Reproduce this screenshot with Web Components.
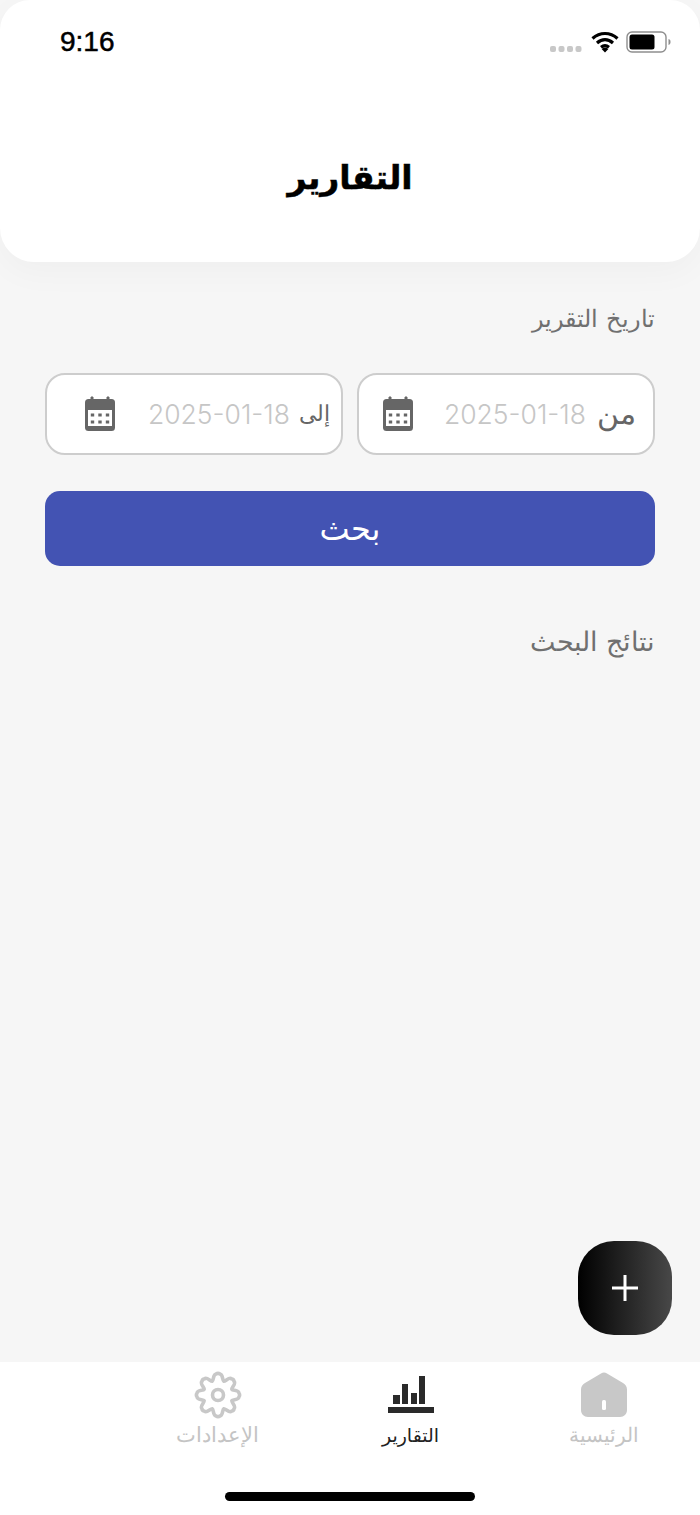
<!DOCTYPE html>
<html lang="ar">
<head>
<meta charset="utf-8">
<title>التقارير</title>
<style>
  html, body { margin: 0; padding: 0; background: #f6f6f6; }
  body { width: 700px; height: 1515px; overflow: hidden; font-family: "DejaVu Sans", sans-serif; }
</style>
</head>
<body>
<report-screen>
  <app-header title="التقارير" time="9:16"></app-header>
  <section-label style="margin-top:41px">تاريخ التقرير</section-label>
  <date-row>
    <date-field label="من" value="2025-01-18" size="30" gap="11" pad-start="17" pad-end="23"></date-field>
    <date-field label="إلى" value="2025-01-18" size="22" gap="9" pad-start="11" pad-end="37"></date-field>
  </date-row>
  <search-button>بحث</search-button>
  <section-label style="margin-top:60px;font-size:26.500px">نتائج البحث</section-label>
  <add-fab></add-fab>
  <tab-bar>
    <tab-item icon="home" label="الرئيسية" size="20"></tab-item>
    <tab-item icon="chart" label="التقارير" size="19" active></tab-item>
    <tab-item icon="gear" label="الإعدادات" size="21"></tab-item>
  </tab-bar>
</report-screen>

<script>
const ARABIC = '"DejaVu Sans", sans-serif';

class ReportScreen extends HTMLElement {
  constructor() {
    super();
    this.attachShadow({ mode: 'open' });
    this.shadowRoot.innerHTML = `
      <style>
        :host { display: flex; flex-direction: column; position: relative; width: 700px; height: 1515px; background: #f6f6f6; overflow: hidden; }
      </style>
      <slot></slot>`;
  }
}

class AppHeader extends HTMLElement {
  constructor() {
    super();
    this.attachShadow({ mode: 'open' });
    this.shadowRoot.innerHTML = `
      <style>
        :host { display: flex; flex-direction: column; height: 262px; flex: none; background: #fff; border-radius: 30px 30px 34px 34px; box-shadow: 0 10px 34px rgba(0,0,0,.03); }
        .status { display: flex; justify-content: space-between; align-items: center; height: 30px; margin-top: 27px; padding: 0 29px 0 60px; }
        .time { font: 400 28px/30px "Liberation Sans", sans-serif; color: #000; -webkit-text-stroke: .5px #000; }
        .icons { display: flex; align-items: center; gap: 8px; }
        .wifi { margin: 0 -1px 0 1px; }
        svg { display: block; }
        h1 { margin: 99px 0 0; text-align: center; font: 700 33px/44px ${ARABIC}; color: #000; -webkit-text-stroke: .5px #000; }
      </style>
      <div class="status">
        <span class="time">${this.getAttribute('time')}</span>
        <div class="icons">
          <svg width="32" height="8" viewBox="0 0 32 8" style="margin-top:14px"><g fill="#c8c8c8"><rect x="0" y="1" width="6" height="6" rx="2"/><rect x="8.500" y="1" width="6" height="6" rx="2"/><rect x="17" y="1" width="6" height="6" rx="2"/><rect x="25.500" y="1" width="6" height="6" rx="2"/></g></svg>
          <svg class="wifi" width="28" height="22" viewBox="0 0 28 22"><path d="M1.500 7.500C9 .8 19 .8 26.500 7.500M6 12C11 7.600 17 7.600 22 12M10 16.300c2.600-2 5.400-2 8 0" fill="none" stroke="#000" stroke-width="3.200"/><path d="M14 21.500l-3.400-3.600c2-1.400 4.800-1.400 6.800 0z"/></svg>
          <svg width="45" height="22" viewBox="0 0 45 22"><rect x="1" y="1" width="39" height="20" rx="5" fill="none" stroke="#8e8e8e" stroke-width="1.400"/><rect x="3.500" y="3.500" width="25" height="15" rx="2.500" fill="#000"/><path d="M42.500 8c1.600.4 2 1.600 2 3s-.4 2.600-2 3z" fill="#8e8e8e"/></svg>
        </div>
      </div>
      <h1>${this.getAttribute('title')}</h1>`;
  }
}

class SectionLabel extends HTMLElement {
  constructor() {
    super();
    this.attachShadow({ mode: 'open' });
    this.shadowRoot.innerHTML = `
      <style>
        :host { display: block; flex: none; direction: rtl; padding: 0 45px; font: 200 24px/32px ${ARABIC}; color: #707070; }
      </style>
      <slot></slot>`;
  }
}

class DateRow extends HTMLElement {
  constructor() {
    super();
    this.attachShadow({ mode: 'open' });
    this.shadowRoot.innerHTML = `
      <style>
        :host { display: grid; grid-template-columns: 1fr 1fr; gap: 14px; flex: none; direction: rtl; margin: 38px 45px 0; }
      </style>
      <slot></slot>`;
  }
}

class DateField extends HTMLElement {
  constructor() {
    super();
    this.attachShadow({ mode: 'open' });
    const start = this.getAttribute('pad-start');
    const end = this.getAttribute('pad-end');
    this.shadowRoot.innerHTML = `
      <style>
        :host { display: flex; align-items: center; box-sizing: border-box; height: 82px; background: #fff; border: 2px solid #cdcdcd; border-radius: 20px; padding: 0 ${start}px 0 ${end}px; direction: rtl; }
        .label { font: 200 ${this.getAttribute('size')}px/32px ${ARABIC}; color: #666; margin-inline-end: ${this.getAttribute('gap')}px; }
        .value { font: 300 26.500px/32px Inter, sans-serif; color: #c6c6c6; direction: ltr; }
        svg { display: block; margin-inline-start: auto; }
      </style>
      <span class="label">${this.getAttribute('label')}</span>
      <span class="value">${this.getAttribute('value')}</span>
      <svg width="32" height="36" viewBox="0 0 32 36">
        <path d="M7 1h2v4H7zM23 1h2v4h-2z" fill="#666" stroke="#666" stroke-width="1"/>
        <rect x="1" y="3" width="30" height="32" rx="3.500" fill="#666"/>
        <rect x="4" y="14" width="24" height="16" fill="#fff"/>
        <g fill="#666"><rect x="6.800" y="17.500" width="3.400" height="3"/><rect x="14.300" y="17.500" width="3.400" height="3"/><rect x="21.800" y="17.500" width="3.400" height="3"/><rect x="6.800" y="24.500" width="3.400" height="3"/><rect x="14.300" y="24.500" width="3.400" height="3"/><rect x="21.800" y="24.500" width="3.400" height="3"/></g>
      </svg>`;
  }
}

class SearchButton extends HTMLElement {
  constructor() {
    super();
    this.attachShadow({ mode: 'open' });
    this.shadowRoot.innerHTML = `
      <style>
        :host { display: flex; align-items: center; justify-content: center; flex: none; height: 75px; margin: 36px 45px 0; border-radius: 15px; background: #4353b3; color: #fff; font: 400 32px/40px ${ARABIC}; direction: rtl; }
      </style>
      <slot></slot>`;
  }
}

class AddFab extends HTMLElement {
  constructor() {
    super();
    this.attachShadow({ mode: 'open' });
    this.shadowRoot.innerHTML = `
      <style>
        :host { position: absolute; left: 578px; top: 1241px; width: 94px; height: 94px; border-radius: 36px; background: linear-gradient(90deg, #000, #484848); display: flex; align-items: center; justify-content: center; }
        svg { display: block; }
      </style>
      <svg width="28" height="28" viewBox="0 0 28 28"><path d="M14 1v26M1 14h26" stroke="#fff" stroke-width="3"/></svg>`;
  }
}

class TabBar extends HTMLElement {
  constructor() {
    super();
    this.attachShadow({ mode: 'open' });
    this.shadowRoot.innerHTML = `
      <style>
        :host { position: absolute; left: 0; right: 0; bottom: 0; height: 153px; background: #fff; direction: rtl; }
        .tabs { display: grid; grid-template-columns: 193px 193px 193px; padding-top: 9px; }
        .pill { position: absolute; left: 225px; top: 130px; width: 250px; height: 9px; border-radius: 5px; background: #000; }
      </style>
      <div class="tabs"><slot></slot></div>
      <div class="pill"></div>`;
  }
}

// gear outline is generated: 8 rounded lobes round a centre ring
function gearPath(cx, cy, outer, inner, teeth) {
  const pts = [];
  const step = Math.PI * 2 / teeth;
  for (let i = 0; i < teeth; i++) {
    const a = -Math.PI / 2 + i * step;
    const p = (r, t) => (cx + r * Math.cos(t)).toFixed(2) + ' ' + (cy + r * Math.sin(t)).toFixed(2);
    if (i === 0) pts.push('M' + p(inner, a - step * .5));
    pts.push('C' + p(inner * 1.02, a - step * .36) + ' ' + p(outer * 1.02, a - step * .30) + ' ' + p(outer, a - step * .12));
    pts.push('C' + p(outer * 1.04, a - step * .04) + ' ' + p(outer * 1.04, a + step * .04) + ' ' + p(outer, a + step * .12));
    pts.push('C' + p(outer * 1.02, a + step * .30) + ' ' + p(inner * 1.02, a + step * .36) + ' ' + p(inner, a + step * .5));
  }
  return pts.join('') + 'Z';
}

const TAB_ICONS = {
  home: `<svg width="48" height="48" viewBox="0 0 48 48"><path d="M24 1.500c1 0 2 .4 3 1L43 12c2.500 1.500 4 3.500 4 6.500V39c0 4-3 7-7 7H8c-4 0-7-3-7-7V18.500C1 15.500 2.500 13.500 5 12L21 2.500c1-.6 2-1 3-1z" fill="#c8c8c8"/><rect x="22" y="29" width="4" height="10" rx="1.500" fill="#fff"/></svg>`,
  chart: `<svg width="48" height="48" viewBox="0 0 48 48"><g fill="#2a2a2a"><rect x="6" y="24" width="7" height="9"/><rect x="15" y="13" width="6" height="20"/><rect x="24" y="22" width="6" height="11"/><rect x="32" y="5" width="6" height="28"/><rect x="1" y="36" width="46" height="6"/></g></svg>`,
  gear: `<svg width="48" height="48" viewBox="0 0 48 48"><g fill="none" stroke="#c8c8c8" stroke-width="3.600" stroke-linejoin="round"><path d="${gearPath(24, 24, 21, 15, 8)}"/><circle cx="24" cy="24" r="5.500"/></g></svg>`
};

class TabItem extends HTMLElement {
  constructor() {
    super();
    this.attachShadow({ mode: 'open' });
    const active = this.hasAttribute('active');
    this.shadowRoot.innerHTML = `
      <style>
        :host { display: flex; flex-direction: column; align-items: center; }
        svg { display: block; }
        span { margin-top: 2px; font: ${active ? 400 : 200} ${this.getAttribute('size')}px/28px ${ARABIC}; color: ${active ? '#222' : '#c4c4c4'}; }
      </style>
      ${TAB_ICONS[this.getAttribute('icon')]}
      <span>${this.getAttribute('label')}</span>`;
  }
}

customElements.define('report-screen', ReportScreen);
customElements.define('app-header', AppHeader);
customElements.define('section-label', SectionLabel);
customElements.define('date-row', DateRow);
customElements.define('date-field', DateField);
customElements.define('search-button', SearchButton);
customElements.define('add-fab', AddFab);
customElements.define('tab-bar', TabBar);
customElements.define('tab-item', TabItem);
</script>
</body>
</html>
